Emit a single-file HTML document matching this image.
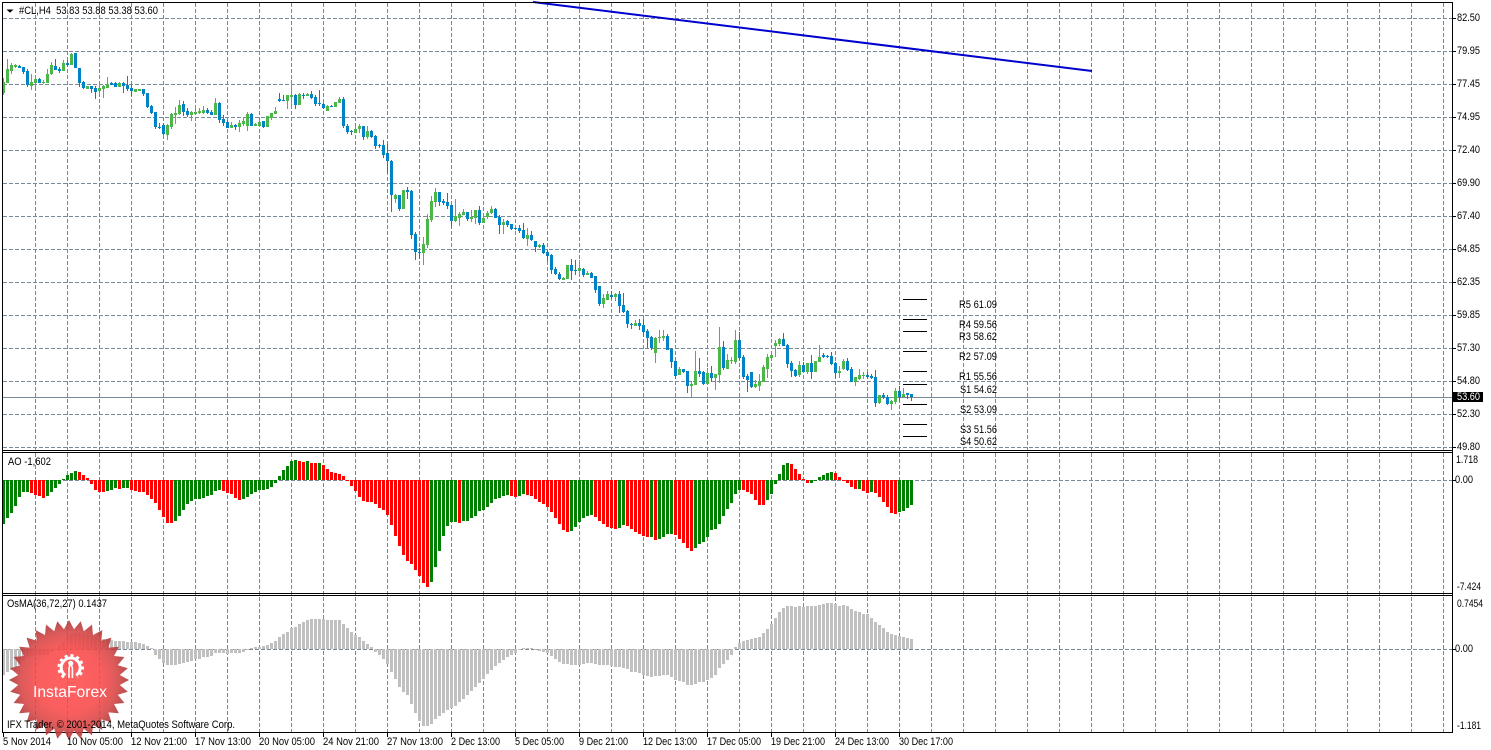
<!DOCTYPE html>
<html>
<head>
<meta charset="utf-8">
<title>#CL,H4</title>
<style>
html,body{margin:0;padding:0;background:#fff;width:1491px;height:750px;overflow:hidden}
svg{display:block}
text{font-family:"Liberation Sans",sans-serif;font-size:11px;fill:#000}
.c{shape-rendering:crispEdges;fill:none}
</style>
</head>
<body>
<svg xmlns="http://www.w3.org/2000/svg" width="1491" height="750" viewBox="0 0 1491 750">
<defs>
<radialGradient id="lg" gradientUnits="userSpaceOnUse" cx="0" cy="0" r="60">
<stop offset="0" stop-color="#ff4b4b"/>
<stop offset=".55" stop-color="#f84848"/>
<stop offset=".8" stop-color="#d84444"/>
<stop offset="1" stop-color="#a83636"/>
</radialGradient>
</defs>
<rect width="1491" height="750" fill="#fff"/>

<!-- grid -->
<path class="c" stroke="#778899" stroke-dasharray="4 2" d="M3 18.5H1452M3 51.5H1452M3 84.5H1452M3 117.5H1452M3 150.5H1452M3 183.5H1452M3 216.5H1452M3 249.5H1452M3 282.5H1452M3 315.5H1452M3 348.5H1452M3 381.5H1452M3 414.5H1452M3 447.5H1452M3 480.5H1452M3 649.5H1452"/>
<path class="c" stroke="#778899" stroke-dasharray="4 2" d="M35.5 3V732M67.5 3V732M99.5 3V732M131.5 3V732M163.5 3V732M195.5 3V732M227.5 3V732M259.5 3V732M291.5 3V732M323.5 3V732M355.5 3V732M387.5 3V732M419.5 3V732M451.5 3V732M483.5 3V732M515.5 3V732M547.5 3V732M579.5 3V732M611.5 3V732M643.5 3V732M675.5 3V732M707.5 3V732M739.5 3V732M771.5 3V732M803.5 3V732M835.5 3V732M867.5 3V732M899.5 3V732M931.5 3V732M963.5 3V732M995.5 3V732M1027.5 3V732M1059.5 3V732M1091.5 3V732M1123.5 3V732M1155.5 3V732M1187.5 3V732M1219.5 3V732M1251.5 3V732M1283.5 3V732M1315.5 3V732M1347.5 3V732M1379.5 3V732M1411.5 3V732M1443.5 3V732"/>

<!-- price line -->
<path class="c" stroke="#778899" d="M3 397.5H1452"/>

<!-- green candles: wicks -->
<path class="c" stroke="#4cb748" d="M3.5 78V95M7.5 59V83M11.5 63V74M15.5 64V68M31.5 74V90M35.5 75V88M43.5 80V84M47.5 69V83M51.5 62V75M63.5 60V71M71.5 53V65M87.5 86V89M99.5 81V95M103.5 85V98M107.5 77V88M119.5 82V87M135.5 89V92M139.5 89V91M167.5 124V140M171.5 113V129M175.5 107V124M179.5 100V115M191.5 111V121M195.5 106V114M199.5 108V114M203.5 106V114M215.5 98V115M231.5 122V128M239.5 120V132M243.5 117V126M247.5 112V131M255.5 123V126M259.5 120V126M267.5 116V127M271.5 113V120M275.5 107V114M287.5 95V109M291.5 80V109M299.5 93V105M307.5 93V96M327.5 105V111M335.5 102V107M339.5 97V103M355.5 127V133M359.5 124V133M367.5 126V139M395.5 194V203M403.5 190V209M423.5 237V265M427.5 214V248M431.5 196V222M435.5 188V207M455.5 199V222M459.5 212V226M463.5 209V215M471.5 210V222M475.5 210V224M483.5 215V223M487.5 211V219M491.5 206V214M503.5 219V234M527.5 228V246M539.5 244V248M563.5 277V280M567.5 265V279M579.5 260V274M587.5 271V275M603.5 294V308M607.5 291V300M615.5 293V301M635.5 320V326M655.5 337V363M659.5 330V343M663.5 330V341M679.5 367V375M691.5 381V397M695.5 351V385M707.5 368V385M715.5 374V390M719.5 327V383M727.5 354V369M731.5 357V364M735.5 330V364M755.5 380V388M759.5 374V391M763.5 365V382M767.5 354V378M771.5 355V358M775.5 340V357M779.5 338V346M799.5 361V377M807.5 363V374M815.5 361V372M819.5 345V362M839.5 366V378M843.5 359V370M855.5 377V386M859.5 369V380M863.5 372V379M879.5 395V404M891.5 400V410M895.5 388V404M903.5 388V397"/>
<!-- green candles: bodies -->
<path class="c" stroke="#4cb748" stroke-width="3" d="M3.5 82V93M7.5 69V83M11.5 65V71M15.5 65V67M31.5 82V86M35.5 79V83M43.5 82V83M47.5 74V83M51.5 65V74M63.5 63V71M71.5 54V65M87.5 86V89M99.5 88V91M103.5 86V89M107.5 84V88M119.5 83V87M135.5 89V92M139.5 89V91M167.5 125V135M171.5 114V127M175.5 113V115M179.5 105V114M191.5 112V115M195.5 112V114M199.5 111V113M203.5 110V113M215.5 103V115M231.5 125V128M239.5 123V127M243.5 121V124M247.5 114V126M255.5 124V126M259.5 122V126M267.5 116V127M271.5 113V118M275.5 111V114M287.5 95V101M291.5 95V97M299.5 94V105M307.5 94V96M327.5 106V111M335.5 102V107M339.5 99V103M355.5 129V133M359.5 126V129M367.5 131V137M395.5 195V199M403.5 190V209M423.5 244V253M427.5 219V245M431.5 201V220M435.5 192V202M455.5 216V221M459.5 214V218M463.5 212V215M471.5 217V219M475.5 210V218M483.5 218V223M487.5 213V217M491.5 209V213M503.5 222V225M527.5 235V239M539.5 245V247M563.5 278V280M567.5 265V279M579.5 268V271M587.5 273V275M603.5 298V304M607.5 294V300M615.5 294V297M635.5 323V326M655.5 338V353M659.5 337V338M663.5 336V338M679.5 369V375M691.5 384V386M695.5 371V385M707.5 373V384M715.5 374V378M719.5 347V375M727.5 360V369M731.5 360V361M735.5 340V362M755.5 384V387M759.5 381V386M763.5 367V382M767.5 357V369M771.5 355V358M775.5 343V346M779.5 339V344M799.5 365V375M807.5 363V372M815.5 361V372M819.5 357V362M839.5 371V373M843.5 361V369M855.5 377V382M859.5 375V379M863.5 375V376M879.5 395V403M891.5 401V404M895.5 391V402M903.5 394V397"/>
<!-- blue candles: wicks -->
<path class="c" stroke="#0082c6" d="M19.5 65V68M23.5 67V74M27.5 69V87M39.5 78V83M55.5 59V70M59.5 67V73M67.5 60V67M75.5 53V68M79.5 68V87M83.5 81V89M91.5 86V93M95.5 86V99M111.5 82V85M115.5 82V87M123.5 82V93M127.5 76V91M131.5 85V96M143.5 89V96M147.5 93V108M151.5 105V114M155.5 112V129M159.5 123V129M163.5 123V135M183.5 101V116M187.5 108V117M207.5 108V114M211.5 110V115M219.5 102V123M223.5 115V126M227.5 120V128M235.5 124V130M251.5 113V126M263.5 121V128M279.5 93V102M283.5 95V101M295.5 94V109M303.5 93V99M311.5 91V99M315.5 95V106M319.5 90V106M323.5 103V109M331.5 105V107M343.5 97V128M347.5 124V134M351.5 130V135M363.5 126V140M371.5 130V138M375.5 135V149M379.5 144V148M383.5 140V158M387.5 144V173M391.5 160V212M399.5 195V211M407.5 187V199M411.5 190V239M415.5 232V260M419.5 248V259M439.5 192V206M443.5 199V205M447.5 193V209M451.5 205V227M467.5 212V221M479.5 206V225M495.5 208V218M499.5 215V234M507.5 220V227M511.5 224V230M515.5 228V230M519.5 225V233M523.5 223V239M531.5 231V241M535.5 241V252M543.5 243V254M547.5 250V261M551.5 254V274M555.5 267V275M559.5 272V280M571.5 259V280M575.5 260V275M583.5 268V277M591.5 272V278M595.5 276V293M599.5 286V306M611.5 291V299M619.5 291V313M623.5 293V313M627.5 310V328M631.5 323V329M639.5 319V330M643.5 319V337M647.5 329V348M651.5 336V350M667.5 334V350M671.5 348V368M675.5 361V379M683.5 369V373M687.5 371V393M699.5 358V377M703.5 371V385M711.5 366V382M723.5 341V370M739.5 332V360M743.5 355V379M747.5 374V392M751.5 372V388M783.5 333V346M787.5 344V368M791.5 361V377M795.5 369V377M803.5 362V372M811.5 355V379M823.5 353V358M827.5 355V358M831.5 352V365M835.5 362V378M847.5 358V371M851.5 367V382M867.5 372V379M871.5 374V379M875.5 370V407M883.5 393V399M887.5 395V405M899.5 386V401M907.5 393V399M911.5 394V401"/>
<!-- blue candles: bodies -->
<path class="c" stroke="#0082c6" stroke-width="3" d="M19.5 66V68M23.5 67V72M27.5 71V85M39.5 79V83M55.5 66V70M59.5 69V71M67.5 63V65M75.5 53V68M79.5 68V83M83.5 82V88M91.5 86V89M95.5 88V92M111.5 83V85M115.5 83V87M123.5 83V86M127.5 85V89M131.5 88V91M143.5 89V94M147.5 93V107M151.5 106V113M155.5 112V127M159.5 127V128M163.5 125V134M183.5 104V112M187.5 111V115M207.5 110V113M211.5 112V115M219.5 103V120M223.5 119V123M227.5 122V128M235.5 125V127M251.5 114V126M263.5 121V127M279.5 99V101M283.5 100V101M295.5 95V105M303.5 95V96M311.5 94V98M315.5 97V104M319.5 103V104M323.5 104V108M331.5 106V107M343.5 99V126M347.5 126V132M351.5 131V132M363.5 126V137M371.5 131V137M375.5 136V146M379.5 145V146M383.5 145V155M387.5 153V161M391.5 161V195M399.5 195V209M407.5 190V192M411.5 191V235M415.5 234V252M419.5 252V253M439.5 192V202M443.5 201V203M447.5 202V206M451.5 205V221M467.5 212V219M479.5 210V223M495.5 209V218M499.5 217V225M507.5 221V225M511.5 224V229M515.5 228V229M519.5 228V231M523.5 230V238M531.5 235V240M535.5 241V247M543.5 245V253M547.5 252V256M551.5 255V270M555.5 269V274M559.5 274V279M571.5 265V271M575.5 270V271M583.5 269V275M591.5 273V278M595.5 276V290M599.5 286V304M611.5 295V297M619.5 294V306M623.5 305V312M627.5 311V324M631.5 324V325M639.5 323V326M643.5 325V332M647.5 331V338M651.5 337V348M667.5 336V350M671.5 349V362M675.5 361V376M683.5 369V372M687.5 371V386M699.5 371V374M703.5 372V384M711.5 373V378M723.5 347V368M739.5 340V358M743.5 357V377M747.5 376V380M751.5 372V387M783.5 339V346M787.5 345V364M791.5 363V371M795.5 370V376M803.5 365V372M811.5 363V372M823.5 355V357M827.5 356V357M831.5 356V364M835.5 363V373M847.5 361V370M851.5 369V382M867.5 375V377M871.5 376V378M875.5 377V403M883.5 395V397M887.5 397V404M899.5 391V397M907.5 393V395M911.5 394V397"/>

<!-- trend line -->
<line x1="533" y1="2" x2="1092" y2="71" stroke="#0000cd" stroke-width="2"/>

<!-- pivots -->
<path class="c" stroke="#000" d="M903 299.5H927M903 319.5H927M903 331.5H927M903 351.5H927M903 371.5H927M903 384.5H927M903 404.5H927M903 424.5H927M903 436.5H927"/>
<text x="959" y="308" textLength="38" lengthAdjust="spacingAndGlyphs">R5 61.09</text>
<text x="959" y="328" textLength="38" lengthAdjust="spacingAndGlyphs">R4 59.56</text>
<text x="959" y="340" textLength="38" lengthAdjust="spacingAndGlyphs">R3 58.62</text>
<text x="959" y="360" textLength="38" lengthAdjust="spacingAndGlyphs">R2 57.09</text>
<text x="959" y="380" textLength="38" lengthAdjust="spacingAndGlyphs">R1 55.56</text>
<text x="960" y="393" textLength="37" lengthAdjust="spacingAndGlyphs">S1 54.62</text>
<text x="960" y="413" textLength="37" lengthAdjust="spacingAndGlyphs">S2 53.09</text>
<text x="960" y="433" textLength="37" lengthAdjust="spacingAndGlyphs">S3 51.56</text>
<text x="960" y="445" textLength="37" lengthAdjust="spacingAndGlyphs">S4 50.62</text>

<!-- AO -->
<path class="c" stroke="#008000" stroke-width="3" d="M3.5 480V524M7.5 480V518M11.5 480V513M15.5 480V506M19.5 480V497M23.5 480V492M27.5 480V492M47.5 480V496M51.5 480V492M55.5 480V488M59.5 480V484M63.5 480V479M67.5 480V475M71.5 480V473M75.5 480V471M107.5 480V491M111.5 480V490M115.5 480V488M123.5 480V488M127.5 480V488M175.5 480V521M179.5 480V516M183.5 480V510M187.5 480V504M191.5 480V501M195.5 480V499M199.5 480V499M203.5 480V498M207.5 480V496M211.5 480V495M215.5 480V491M219.5 480V490M243.5 480V499M247.5 480V497M251.5 480V494M255.5 480V492M259.5 480V490M263.5 480V490M267.5 480V489M271.5 480V487M275.5 480V483M279.5 480V476M283.5 480V470M287.5 480V466M291.5 480V461M295.5 480V460M307.5 480V461M319.5 480V463M431.5 480V582M435.5 480V567M439.5 480V551M443.5 480V536M447.5 480V526M451.5 480V522M455.5 480V522M463.5 480V521M467.5 480V521M471.5 480V518M475.5 480V516M479.5 480V511M483.5 480V510M487.5 480V507M491.5 480V503M495.5 480V499M499.5 480V498M503.5 480V496M507.5 480V495M519.5 480V496M523.5 480V494M571.5 480V531M575.5 480V527M579.5 480V522M583.5 480V518M587.5 480V516M591.5 480V515M619.5 480V528M623.5 480V525M651.5 480V537M659.5 480V539M663.5 480V537M667.5 480V534M671.5 480V534M695.5 480V548M699.5 480V544M703.5 480V542M707.5 480V537M711.5 480V530M715.5 480V529M719.5 480V524M723.5 480V516M727.5 480V509M731.5 480V503M735.5 480V494M739.5 480V490M767.5 480V500M771.5 480V494M775.5 480V484M779.5 480V474M783.5 480V465M787.5 480V463M811.5 480V483M815.5 480V481M819.5 480V477M823.5 480V475M827.5 480V473M831.5 480V472M859.5 480V489M871.5 480V492M899.5 480V512M903.5 480V511M907.5 480V508M911.5 480V505"/>
<path class="c" stroke="#ff0000" stroke-width="3" d="M31.5 480V493M35.5 480V495M39.5 480V496M43.5 480V498M79.5 480V472M83.5 480V475M87.5 480V478M91.5 480V484M95.5 480V490M99.5 480V492M103.5 480V492M119.5 480V489M131.5 480V490M135.5 480V491M139.5 480V492M143.5 480V492M147.5 480V495M151.5 480V499M155.5 480V503M159.5 480V510M163.5 480V517M167.5 480V523M171.5 480V523M223.5 480V491M227.5 480V493M231.5 480V494M235.5 480V498M239.5 480V500M299.5 480V461M303.5 480V462M311.5 480V463M315.5 480V463M323.5 480V465M327.5 480V469M331.5 480V472M335.5 480V473M339.5 480V474M343.5 480V476M347.5 480V481M351.5 480V486M355.5 480V491M359.5 480V497M363.5 480V501M367.5 480V502M371.5 480V502M375.5 480V504M379.5 480V508M383.5 480V510M387.5 480V515M391.5 480V525M395.5 480V536M399.5 480V546M403.5 480V555M407.5 480V561M411.5 480V564M415.5 480V570M419.5 480V576M423.5 480V583M427.5 480V587M459.5 480V523M511.5 480V496M515.5 480V497M527.5 480V495M531.5 480V496M535.5 480V499M539.5 480V502M543.5 480V504M547.5 480V507M551.5 480V512M555.5 480V518M559.5 480V524M563.5 480V530M567.5 480V532M595.5 480V517M599.5 480V521M603.5 480V524M607.5 480V527M611.5 480V528M615.5 480V529M627.5 480V526M631.5 480V529M635.5 480V532M639.5 480V534M643.5 480V536M647.5 480V537M655.5 480V540M675.5 480V535M679.5 480V539M683.5 480V543M687.5 480V548M691.5 480V551M743.5 480V490M747.5 480V492M751.5 480V494M755.5 480V500M759.5 480V505M763.5 480V505M791.5 480V464M795.5 480V469M799.5 480V474M803.5 480V479M807.5 480V483M835.5 480V473M839.5 480V477M843.5 480V481M847.5 480V483M851.5 480V487M855.5 480V489M863.5 480V491M867.5 480V493M875.5 480V493M879.5 480V497M883.5 480V502M887.5 480V507M891.5 480V513M895.5 480V514"/>

<!-- OsMA -->
<path class="c" stroke="#c0c0c0" stroke-width="3" d="M3.5 649V675M7.5 649V672M11.5 649V670M15.5 649V667M19.5 649V665M23.5 649V660M27.5 649V657M31.5 649V656M35.5 649V655M39.5 649V655M43.5 649V655M47.5 649V655M51.5 649V652M55.5 649V650M59.5 649V645M63.5 649V642M67.5 649V637M71.5 649V634M75.5 649V633M79.5 649V633M83.5 649V634M87.5 649V635M91.5 649V636M95.5 649V637M99.5 649V638M103.5 649V639M107.5 649V639M111.5 649V640M115.5 649V641M119.5 649V641M123.5 649V641M127.5 649V642M131.5 649V642M135.5 649V642M139.5 649V643M143.5 649V644M147.5 649V646M151.5 649V648M155.5 649V655M159.5 649V659M163.5 649V663M167.5 649V665M171.5 649V665M175.5 649V665M179.5 649V664M183.5 649V663M187.5 649V662M191.5 649V661M195.5 649V659M199.5 649V659M203.5 649V657M207.5 649V657M211.5 649V656M215.5 649V653M219.5 649V653M223.5 649V653M227.5 649V654M231.5 649V653M235.5 649V653M239.5 649V653M243.5 649V652M247.5 649V650M251.5 649V648M255.5 649V647M259.5 649V647M263.5 649V646M267.5 649V645M271.5 649V643M275.5 649V641M279.5 649V637M283.5 649V634M287.5 649V632M291.5 649V628M295.5 649V627M299.5 649V624M303.5 649V622M307.5 649V620M311.5 649V619M315.5 649V619M319.5 649V619M323.5 649V619M327.5 649V620M331.5 649V620M335.5 649V620M339.5 649V620M343.5 649V624M347.5 649V628M351.5 649V632M355.5 649V635M359.5 649V637M363.5 649V641M367.5 649V644M371.5 649V647M375.5 649V652M379.5 649V655M383.5 649V659M387.5 649V664M391.5 649V672M395.5 649V679M399.5 649V687M403.5 649V692M407.5 649V695M411.5 649V704M415.5 649V713M419.5 649V721M423.5 649V726M427.5 649V726M431.5 649V724M435.5 649V719M439.5 649V716M443.5 649V713M447.5 649V710M451.5 649V708M455.5 649V706M459.5 649V702M463.5 649V699M467.5 649V695M471.5 649V691M475.5 649V687M479.5 649V683M483.5 649V679M487.5 649V674M491.5 649V670M495.5 649V666M499.5 649V663M503.5 649V660M507.5 649V657M511.5 649V655M515.5 649V653M519.5 649V650M523.5 649V648M527.5 649V648M531.5 649V648M535.5 649V650M539.5 649V651M543.5 649V652M547.5 649V653M551.5 649V656M555.5 649V659M559.5 649V662M563.5 649V664M567.5 649V664M571.5 649V665M575.5 649V665M579.5 649V665M583.5 649V664M587.5 649V663M591.5 649V663M595.5 649V664M599.5 649V665M603.5 649V665M607.5 649V665M611.5 649V666M615.5 649V667M619.5 649V667M623.5 649V668M627.5 649V669M631.5 649V672M635.5 649V672M639.5 649V673M643.5 649V675M647.5 649V676M651.5 649V677M655.5 649V676M659.5 649V676M663.5 649V675M667.5 649V675M671.5 649V677M675.5 649V680M679.5 649V681M683.5 649V682M687.5 649V685M691.5 649V685M695.5 649V684M699.5 649V682M703.5 649V682M707.5 649V680M711.5 649V678M715.5 649V675M719.5 649V668M723.5 649V664M727.5 649V660M731.5 649V655M735.5 649V647M739.5 649V643M743.5 649V641M747.5 649V640M751.5 649V639M755.5 649V638M759.5 649V637M763.5 649V633M767.5 649V629M771.5 649V624M775.5 649V618M779.5 649V612M783.5 649V608M787.5 649V606M791.5 649V606M795.5 649V607M799.5 649V606M803.5 649V607M807.5 649V606M811.5 649V606M815.5 649V606M819.5 649V605M823.5 649V604M827.5 649V603M831.5 649V603M835.5 649V604M839.5 649V606M843.5 649V605M847.5 649V606M851.5 649V609M855.5 649V611M859.5 649V612M863.5 649V614M867.5 649V614M871.5 649V618M875.5 649V622M879.5 649V625M883.5 649V628M887.5 649V632M891.5 649V634M895.5 649V635M899.5 649V636M903.5 649V637M907.5 649V638M911.5 649V639"/>

<!-- frames -->
<path class="c" stroke="#000" d="M2.5 2V733M1452.5 2V733M2 2.5H1453M2 450.5H1453M2 452.5H1453M2 593.5H1453M2 595.5H1453M2 732.5H1453"/>

<!-- axis ticks -->
<path class="c" stroke="#000" d="M1453 18.5h3M1453 51.5h3M1453 84.5h3M1453 117.5h3M1453 150.5h3M1453 183.5h3M1453 216.5h3M1453 249.5h3M1453 282.5h3M1453 315.5h3M1453 348.5h3M1453 381.5h3M1453 414.5h3M1453 447.5h3M1453 480.5h3M1453 649.5h3M3.5 733v4M67.5 733v4M131.5 733v4M195.5 733v4M259.5 733v4M323.5 733v4M387.5 733v4M451.5 733v4M515.5 733v4M579.5 733v4M643.5 733v4M707.5 733v4M771.5 733v4M835.5 733v4M899.5 733v4"/>

<!-- InstaForex logo -->
<g transform="translate(69 680)" opacity=".88">
<polygon fill="url(#lg)" points="0,-60 5,-50.8 11.7,-58.8 14.8,-48.8 23,-55.4 24,-45 33.3,-49.9 32.4,-39.4 42.4,-42.4 39.4,-32.4 49.9,-33.3 45,-24 55.4,-23 48.8,-14.8 58.8,-11.7 50.8,-5 60,0 50.8,5 58.8,11.7 48.8,14.8 55.4,23 45,24 49.9,33.3 39.4,32.4 42.4,42.4 32.4,39.4 33.3,49.9 24,45 23,55.4 14.8,48.8 11.7,58.8 5,50.8 0,60 -5,50.8 -11.7,58.8 -14.8,48.8 -23,55.4 -24,45 -33.3,49.9 -32.4,39.4 -42.4,42.4 -39.4,32.4 -49.9,33.3 -45,24 -55.4,23 -48.8,14.8 -58.8,11.7 -50.8,5 -60,0 -50.8,-5 -58.8,-11.7 -48.8,-14.8 -55.4,-23 -45,-24 -49.9,-33.3 -39.4,-32.4 -42.4,-42.4 -32.4,-39.4 -33.3,-49.9 -24,-45 -23,-55.4 -14.8,-48.8 -11.7,-58.8 -5,-50.8"/>
</g>
<g fill="none" stroke="#fff">
<path stroke-width="3" d="M65.25 675.3A9.5 9.5 0 1 1 76.15 675.3"/>
<path stroke-width="2.6" stroke-dasharray="3 3" d="M63.8 677.3A12 12 0 1 1 77.6 677.3"/>
<path stroke-width="1.6" d="M69 678V668L70 665M72.4 678V668L71.4 665"/>
</g>
<circle cx="70.7" cy="663.3" r="2.6" fill="#fff"/>
<text x="33" y="697" textLength="74" lengthAdjust="spacingAndGlyphs" style="font-size:16px;fill:#fff">InstaForex</text>

<!-- header text -->
<path d="M6.5 9.5H13.5L10 12.8Z" fill="#000"/>
<text x="19" y="14" textLength="139" lengthAdjust="spacingAndGlyphs" xml:space="preserve">#CL,H4  53.83 53.88 53.38 53.60</text>
<text x="8" y="465" textLength="43" lengthAdjust="spacingAndGlyphs">AO -1,602</text>
<text x="7" y="607" textLength="100" lengthAdjust="spacingAndGlyphs">OsMA(36,72,27) 0.1437</text>
<text x="7" y="728" textLength="228" lengthAdjust="spacingAndGlyphs">IFX Trader, © 2001-2014, MetaQuotes Software Corp.</text>

<!-- price axis -->
<text x="1457" y="21" textLength="23" lengthAdjust="spacingAndGlyphs">82.50</text>
<text x="1457" y="54" textLength="23" lengthAdjust="spacingAndGlyphs">79.95</text>
<text x="1457" y="87" textLength="23" lengthAdjust="spacingAndGlyphs">77.45</text>
<text x="1457" y="120" textLength="23" lengthAdjust="spacingAndGlyphs">74.95</text>
<text x="1457" y="153" textLength="23" lengthAdjust="spacingAndGlyphs">72.40</text>
<text x="1457" y="186" textLength="23" lengthAdjust="spacingAndGlyphs">69.90</text>
<text x="1457" y="219" textLength="23" lengthAdjust="spacingAndGlyphs">67.40</text>
<text x="1457" y="252" textLength="23" lengthAdjust="spacingAndGlyphs">64.85</text>
<text x="1457" y="285" textLength="23" lengthAdjust="spacingAndGlyphs">62.35</text>
<text x="1457" y="318" textLength="23" lengthAdjust="spacingAndGlyphs">59.85</text>
<text x="1457" y="351" textLength="23" lengthAdjust="spacingAndGlyphs">57.30</text>
<text x="1457" y="384" textLength="23" lengthAdjust="spacingAndGlyphs">54.80</text>
<rect x="1453" y="392" width="30" height="10" fill="#000" shape-rendering="crispEdges"/>
<text x="1457" y="400" textLength="23" lengthAdjust="spacingAndGlyphs" style="fill:#fff">53.60</text>
<text x="1457" y="417" textLength="23" lengthAdjust="spacingAndGlyphs">52.30</text>
<text x="1457" y="450" textLength="23" lengthAdjust="spacingAndGlyphs">49.80</text>
<text x="1456" y="463" textLength="22" lengthAdjust="spacingAndGlyphs">1.718</text>
<text x="1455" y="483" textLength="18" lengthAdjust="spacingAndGlyphs">0.00</text>
<text x="1457" y="590" textLength="24" lengthAdjust="spacingAndGlyphs">-7.424</text>
<text x="1457" y="607" textLength="26" lengthAdjust="spacingAndGlyphs">0.7454</text>
<text x="1455" y="652" textLength="18" lengthAdjust="spacingAndGlyphs">0.00</text>
<text x="1457" y="729" textLength="24" lengthAdjust="spacingAndGlyphs">-1.181</text>

<!-- time axis -->
<text x="3" y="745" textLength="48" lengthAdjust="spacingAndGlyphs">5 Nov 2014</text>
<text x="67" y="745" textLength="56" lengthAdjust="spacingAndGlyphs">10 Nov 05:00</text>
<text x="131" y="745" textLength="56" lengthAdjust="spacingAndGlyphs">12 Nov 21:00</text>
<text x="195" y="745" textLength="56" lengthAdjust="spacingAndGlyphs">17 Nov 13:00</text>
<text x="259" y="745" textLength="56" lengthAdjust="spacingAndGlyphs">20 Nov 05:00</text>
<text x="323" y="745" textLength="56" lengthAdjust="spacingAndGlyphs">24 Nov 21:00</text>
<text x="387" y="745" textLength="56" lengthAdjust="spacingAndGlyphs">27 Nov 13:00</text>
<text x="451" y="745" textLength="49" lengthAdjust="spacingAndGlyphs">2 Dec 13:00</text>
<text x="515" y="745" textLength="49" lengthAdjust="spacingAndGlyphs">5 Dec 05:00</text>
<text x="579" y="745" textLength="49" lengthAdjust="spacingAndGlyphs">9 Dec 21:00</text>
<text x="643" y="745" textLength="54" lengthAdjust="spacingAndGlyphs">12 Dec 13:00</text>
<text x="707" y="745" textLength="54" lengthAdjust="spacingAndGlyphs">17 Dec 05:00</text>
<text x="771" y="745" textLength="54" lengthAdjust="spacingAndGlyphs">19 Dec 21:00</text>
<text x="835" y="745" textLength="54" lengthAdjust="spacingAndGlyphs">24 Dec 13:00</text>
<text x="899" y="745" textLength="54" lengthAdjust="spacingAndGlyphs">30 Dec 17:00</text>
</svg>
</body>
</html>
